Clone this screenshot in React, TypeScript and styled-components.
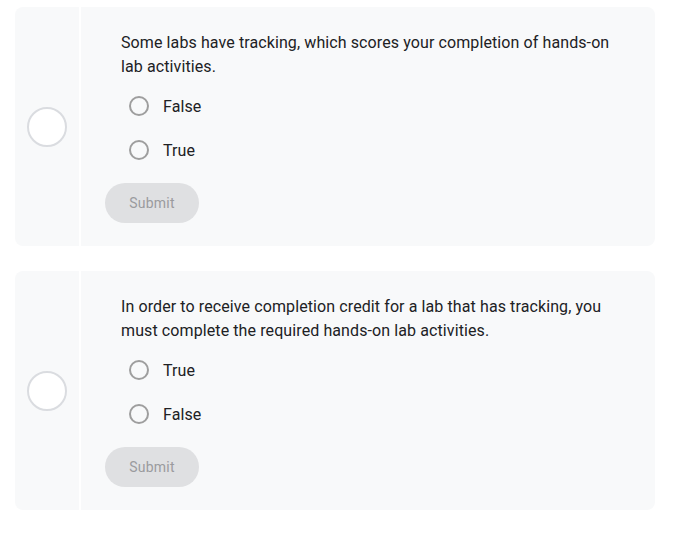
import React from "react";
import styled, { createGlobalStyle } from "styled-components";

const Global = createGlobalStyle`
  html, body { margin: 0; padding: 0; background: #ffffff; }
  body { font-family: Roboto, "Noto Sans", Arial, sans-serif; color: #202124; }
`;

const Page = styled.div`
  display: flex;
  flex-direction: column;
  gap: 25px;
  padding: 7px 25px 0 15px;
`;

const Card = styled.div`
  display: flex;
  gap: 2px;
  height: 239px;
`;

const Side = styled.div`
  width: 64px;
  flex: none;
  background: #f8f9fa;
  border-radius: 8px 0 0 8px;
  display: flex;
  align-items: center;
  justify-content: center;
`;

const Status = styled.div`
  width: 40px;
  height: 40px;
  box-sizing: border-box;
  border-radius: 50%;
  border: 2px solid #dadce0;
  background: #ffffff;
`;

const Body = styled.div`
  flex: 1;
  background: #f8f9fa;
  border-radius: 0 8px 8px 0;
  padding: 24px 24px 0 24px;
  display: flex;
  flex-direction: column;
  align-items: flex-start;
`;

const Question = styled.p`
  margin: 0;
  padding: 0 16px;
  font-size: 16px;
  line-height: 24px;
  letter-spacing: 0.1px;
  color: #202124;
`;

const Options = styled.div`
  margin-top: 5px;
  display: flex;
  flex-direction: column;
`;

const Option = styled.label`
  height: 44px;
  display: flex;
  align-items: center;
  padding-left: 24px;
  font-size: 16px;
  letter-spacing: 0.1px;
  color: #202124;
  cursor: pointer;
`;

const Radio = styled.span`
  width: 20px;
  height: 20px;
  box-sizing: border-box;
  border-radius: 50%;
  border: 2px solid #9e9e9e;
  margin-right: 14px;
  flex: none;
`;

const Submit = styled.button`
  margin-top: 11px;
  width: 94px;
  height: 40px;
  border: none;
  border-radius: 20px;
  background: #dfe0e2;
  color: #9a9b9e;
  font-family: Roboto, "Noto Sans", Arial, sans-serif;
  font-size: 14px;
  letter-spacing: 0.2px;
  cursor: default;
`;

type Q = { text: string; options: string[] };

const questions: Q[] = [
  {
    text: "Some labs have tracking, which scores your completion of hands-on lab activities.",
    options: ["False", "True"],
  },
  {
    text: "In order to receive completion credit for a lab that has tracking, you must complete the required hands-on lab activities.",
    options: ["True", "False"],
  },
];

export default function App() {
  return (
    <>
      <Global />
      <Page>
        {questions.map((q, i) => (
          <Card key={i}>
            <Side>
              <Status />
            </Side>
            <Body>
              <Question>{q.text}</Question>
              <Options>
                {q.options.map((o) => (
                  <Option key={o}>
                    <Radio />
                    {o}
                  </Option>
                ))}
              </Options>
              <Submit disabled>Submit</Submit>
            </Body>
          </Card>
        ))}
      </Page>
    </>
  );
}
